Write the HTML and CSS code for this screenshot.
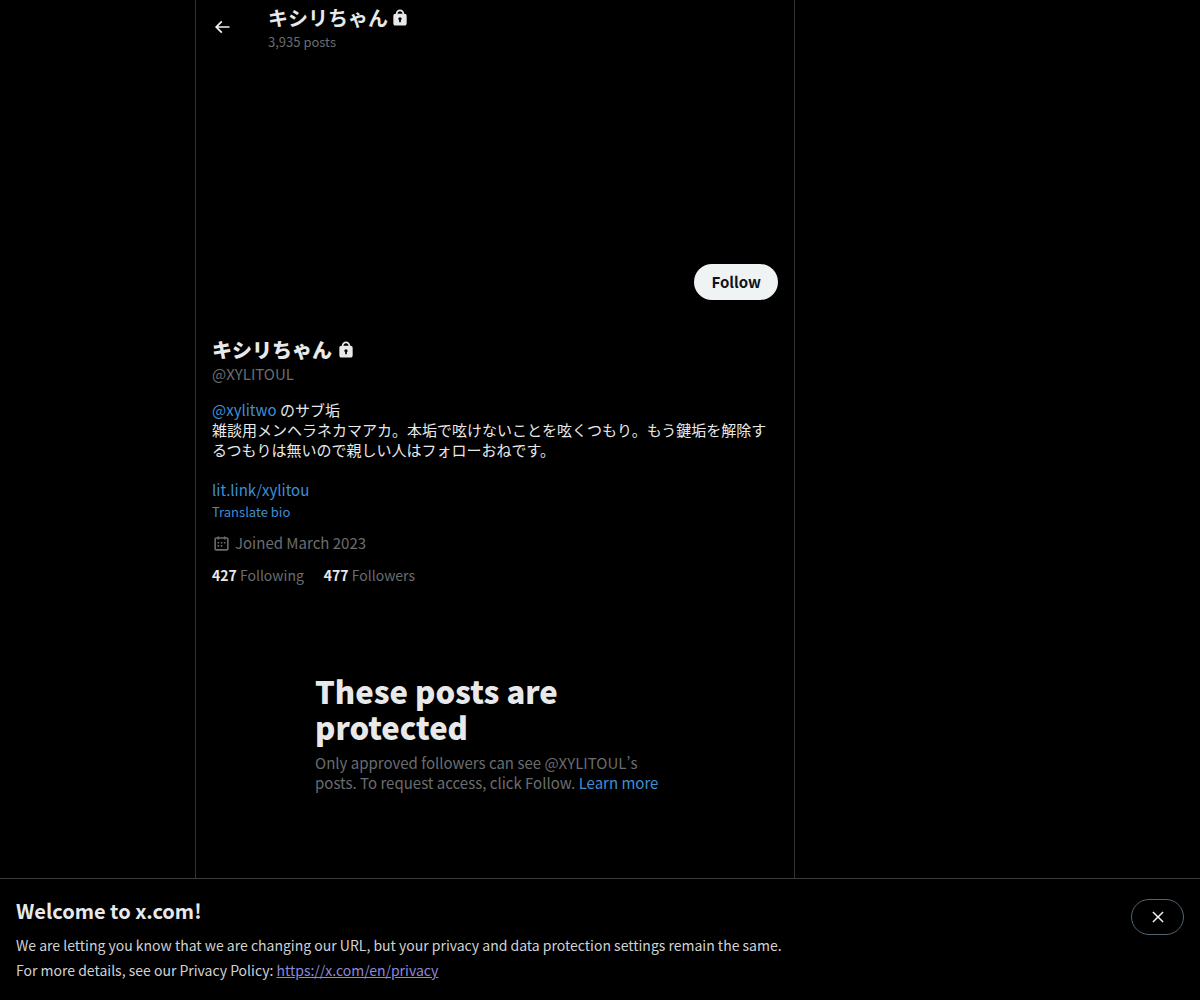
FILE: index.html
```html
<!DOCTYPE html>
<html lang="ja">
<head>
  <meta charset="UTF-8" />
  <meta name="viewport" content="width=device-width, initial-scale=1.0" />
  <title>キシリちゃん (@XYLITOUL) / X</title>
  <link rel="stylesheet" href="styles.css">
</head>
<body>
  <div class="page">
    <main class="column">
      <header class="topbar">
        <button class="back" type="button" aria-label="Back">
          <svg viewBox="0 0 24 24"><path d="M7.414 13l5.043 5.04-1.414 1.42L3.586 12l7.457-7.46 1.414 1.42L7.414 11H21v2H7.414z"/></svg>
        </button>
        <div class="top-title">
          <h2 class="top-name">キシリちゃん<svg class="lock" viewBox="0 0 24 24"><path d="M17.5 7H17v-.25c0-2.76-2.24-5-5-5s-5 2.24-5 5V7h-.5C5.12 7 4 8.12 4 9.5v9C4 19.88 5.12 21 6.5 21h11c1.39 0 2.5-1.12 2.5-2.5v-9C20 8.12 18.89 7 17.5 7zM13 14.73V17h-2v-2.27c-.59-.34-1-.99-1-1.73 0-1.1.9-2 2-2 1.11 0 2 .9 2 2 0 .74-.4 1.39-1 1.73zM15 7H9v-.25c0-1.66 1.35-3 3-3 1.66 0 3 1.34 3 3V7z"/></svg></h2>
          <p class="post-count">3,935 posts</p>
        </div>
      </header>
      <div class="cover"></div>
      <section class="profile">
        <div class="actions">
          <button class="follow" type="button">Follow</button>
        </div>
        <h1 class="name">キシリちゃん<svg class="lock" viewBox="0 0 24 24"><path d="M17.5 7H17v-.25c0-2.76-2.24-5-5-5s-5 2.24-5 5V7h-.5C5.12 7 4 8.12 4 9.5v9C4 19.88 5.12 21 6.5 21h11c1.39 0 2.5-1.12 2.5-2.5v-9C20 8.12 18.89 7 17.5 7zM13 14.73V17h-2v-2.27c-.59-.34-1-.99-1-1.73 0-1.1.9-2 2-2 1.11 0 2 .9 2 2 0 .74-.4 1.39-1 1.73zM15 7H9v-.25c0-1.66 1.35-3 3-3 1.66 0 3 1.34 3 3V7z"/></svg></h1>
        <p class="handle">@XYLITOUL</p>
        <p class="bio"><a href="#">@xylitwo</a> のサブ垢<br>雑談用メンヘラネカマアカ。本垢で呟けないことを呟くつもり。もう鍵垢を解除するつもりは無いので親しい人はフォローおねです。<br><br><a href="#">lit.link/xylitou</a></p>
        <button class="translate" type="button">Translate bio</button>
        <p class="joined">
          <svg viewBox="0 0 24 24"><path d="M7 4V3h2v1h6V3h2v1h1.5C19.89 4 21 5.12 21 6.5v12c0 1.38-1.11 2.5-2.5 2.5h-13C4.12 21 3 19.88 3 18.5v-12C3 5.12 4.12 4 5.5 4H7zm0 2H5.5c-.27 0-.5.22-.5.5v12c0 .28.23.5.5.5h13c.28 0 .5-.22.5-.5v-12c0-.28-.22-.5-.5-.5H17v1h-2V6H9v1H7V6zm0 6h2v-2H7v2zm0 4h2v-2H7v2zm4-4h2v-2h-2v2zm0 4h2v-2h-2v2zm4-4h2v-2h-2v2z"/></svg>
          Joined March 2023
        </p>
        <div class="stats">
          <span><b>427</b> Following</span>
          <span><b>477</b> Followers</span>
        </div>
      </section>
      <section class="protected">
        <h2>These posts are protected</h2>
        <p>Only approved followers can see @XYLITOUL’s posts. To request access, click Follow. <a href="#">Learn more</a></p>
      </section>
    </main>
  </div>

  <aside class="notice">
    <div>
      <h2>Welcome to x.com!</h2>
      <p>We are letting you know that we are changing our URL, but your privacy and data protection settings remain the same.</p>
      <p>For more details, see our Privacy Policy: <a href="https://x.com/en/privacy">https://x.com/en/privacy</a></p>
    </div>
    <button class="close" type="button" aria-label="Close">
      <svg viewBox="0 0 24 24"><path d="M10.59 12L4.54 5.96l1.42-1.42L12 10.59l6.04-6.05 1.42 1.42L13.41 12l6.05 6.04-1.42 1.42L12 13.41l-6.04 6.05-1.42-1.42L10.59 12z"/></svg>
    </button>
  </aside>
</body>
</html>
```

FILE: styles.css
```css
* { box-sizing: border-box; }
body {
  margin: 0;
  min-height: 100vh;
  display: flex;
  flex-direction: column;
  background: #000;
  color: #e7e9ea;
  font-family: "Noto Sans CJK JP", "Noto Sans", sans-serif;
  font-size: 15px;
  line-height: 20px;
}
h1, h2, p { margin: 0; }
a { color: #3d8fd6; text-decoration: none; }
button {
  font-family: inherit;
  border: none;
  cursor: pointer;
}
svg { fill: currentColor; }

.page {
  flex: 1;
  display: grid;
  grid-template-columns: 13fr minmax(0, 600px) 27fr;
}
.column {
  grid-column: 2;
  border-left: 1px solid #2f3336;
  border-right: 1px solid #2f3336;
}

.topbar {
  display: flex;
  align-items: center;
  height: 53px;
  padding: 0 16px;
}
.back {
  display: flex;
  width: 56px;
  padding: 0;
  background: none;
  color: #eff3f4;
}
.back svg { width: 20px; height: 20px; }
.top-title { padding-top: 6px; }
.top-name, .name {
  display: flex;
  align-items: center;
  font-size: 20px;
  line-height: 24px;
}
.top-name { gap: 2px; }
.name { gap: 4px; font-weight: 800; }
.lock { width: 20px; height: 20px; }
.post-count {
  color: #6a6d70;
  font-size: 13px;
  line-height: 16px;
  padding: 4px 0;
}

.cover { height: 199px; }
.profile { padding: 12px 16px; }
.actions {
  display: flex;
  justify-content: flex-end;
  height: 74px;
}
.follow {
  height: 36px;
  padding: 0 17px 2px;
  border-radius: 18px;
  background: #eff3f4;
  color: #0f1419;
  font-size: 15px;
  font-weight: bold;
}
.handle, .joined, .stats { color: #6a6d70; }
.handle { margin: 2px 0 16px; }
.translate {
  display: block;
  padding: 0;
  margin: 4px 0 13px;
  background: none;
  color: #3d8fd6;
  font-size: 13px;
  line-height: 16px;
}
.joined {
  display: flex;
  align-items: center;
  gap: 4px;
  margin-bottom: 12px;
}
.joined svg { width: 19px; height: 19px; }
.stats {
  display: flex;
  gap: 20px;
  font-size: 14px;
}
.stats b { color: #e7e9ea; }

.protected {
  max-width: 400px;
  margin: 64px auto 0;
  padding: 12px 20px 80px;
}
.protected h2 {
  font-size: 31px;
  font-weight: 800;
  line-height: 36px;
  margin-bottom: 8px;
}
.protected p { color: #6a6d70; }

.notice {
  display: flex;
  justify-content: space-between;
  align-items: flex-start;
  padding: 20px 16px 17px;
  border-top: 1px solid #3a3d40;
}
.notice h2 {
  font-size: 20px;
  line-height: 24px;
  margin-bottom: 10px;
}
.notice p {
  color: #d0d2d3;
  font-size: 14px;
  line-height: 25px;
}
.notice p a { color: #8f87d8; text-decoration: underline; }
.close {
  display: flex;
  align-items: center;
  justify-content: center;
  width: 53px;
  height: 36px;
  border: 1px solid #536471;
  border-radius: 18px;
  background: none;
  color: #eff3f4;
}
.close svg { width: 18px; height: 18px; flex: none; }
```
